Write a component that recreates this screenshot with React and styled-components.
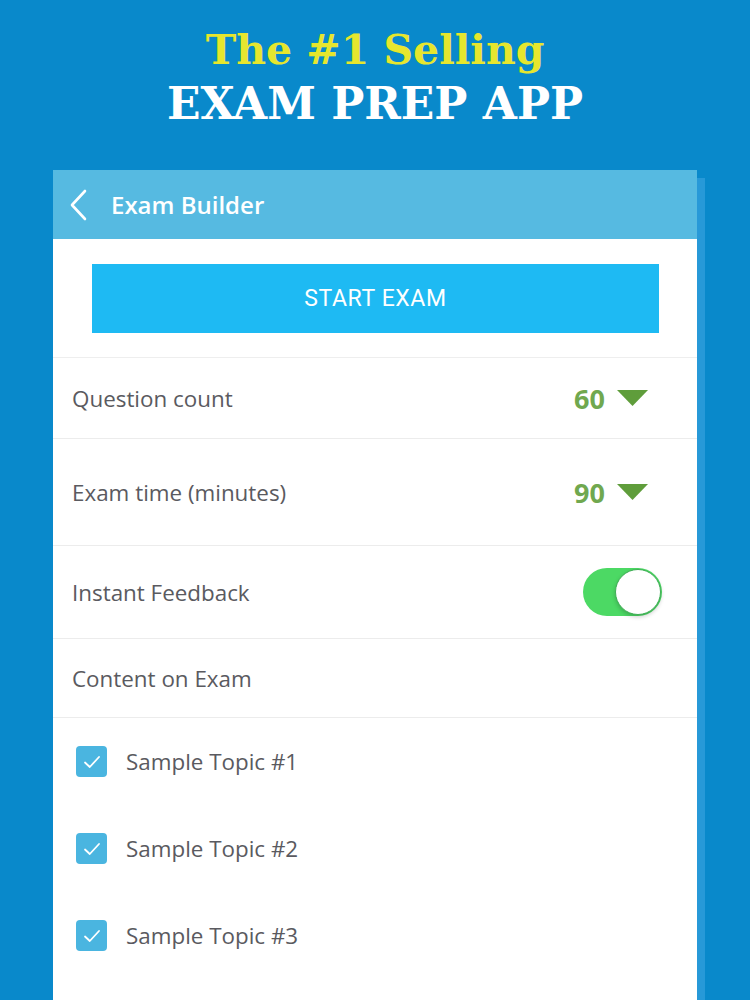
import React from "react";
import styled, { createGlobalStyle } from "styled-components";

const Global = createGlobalStyle`
  html, body { margin: 0; padding: 0; }
  body {
    background: #0989cb;
    width: 750px;
    height: 1000px;
    overflow: hidden;
    font-family: "Open Sans", "Liberation Sans", sans-serif;
  }
`;

const Page = styled.div`
  width: 750px;
  height: 1000px;
  overflow: hidden;
  display: flex;
  flex-direction: column;
`;

const Headline = styled.div`
  height: 170px;
  box-sizing: border-box;
  padding-top: 24px;
  display: flex;
  flex-direction: column;
  align-items: center;
  font-family: "DejaVu Serif", "Liberation Serif", serif;
  font-weight: bold;
`;

const Line = styled.div`
  color: ${(p) => p.color};
  font-size: ${(p) => p.size}px;
  line-height: ${(p) => p.lh}px;
  white-space: nowrap;
`;

const Card = styled.div`
  width: 644px;
  margin-left: 53px;
  background: #fff;
  box-shadow: 8px 8px 0 #2799d8;
  flex: 1;
  display: flex;
  flex-direction: column;
`;

const Header = styled.div`
  height: 69px;
  flex-shrink: 0;
  background: #56bae1;
  display: flex;
  align-items: center;
  padding-left: 16px;
  gap: 22px;
  color: #fff;
`;

const HeaderTitle = styled.div`
  font-size: 24px;
  font-weight: 600;
`;

const ButtonArea = styled.div`
  padding: 25px 38px 24px 39px;
  border-bottom: 1px solid #eeeeee;
`;

const StartButton = styled.div`
  height: 69px;
  background: #1ebaf3;
  color: #fff;
  font-family: Roboto, "Open Sans", sans-serif;
  font-size: 23px;
  letter-spacing: 0.6px;
  display: flex;
  align-items: center;
  justify-content: center;
`;

const Row = styled.div`
  height: ${(p) => p.h}px;
  flex-shrink: 0;
  box-sizing: border-box;
  border-bottom: 1px solid #ececec;
  display: flex;
  align-items: center;
  justify-content: space-between;
  padding: 0 36px 0 19px;
`;

const Label = styled.div`
  font-size: 22.4px;
  color: #5a5a60;
`;

const Value = styled.div`
  display: flex;
  align-items: center;
  gap: 12px;
  margin-right: 13px;
  color: #70a84f;
  font-weight: 700;
  font-size: 27px;
`;

const Toggle = styled.div`
  width: 79px;
  height: 48px;
  border-radius: 24px;
  background: #4cd964;
  position: relative;
  margin-right: -1px;
`;

const Knob = styled.div`
  position: absolute;
  right: 1px;
  top: 1px;
  width: 44px;
  height: 44px;
  border-radius: 50%;
  background: #fff;
  border: 1px solid #3fae55;
  box-shadow: 0 2px 4px rgba(0, 0, 0, 0.2);
`;

const TopicRow = styled.div`
  height: 87px;
  flex-shrink: 0;
  display: flex;
  align-items: center;
  gap: 19px;
  padding-left: 23px;
`;

const Check = styled.div`
  width: 31px;
  height: 31px;
  border-radius: 4px;
  background: #4ab5e0;
  display: flex;
  align-items: center;
  justify-content: center;
`;

const Triangle = () => (
  <svg width="31" height="16" viewBox="0 0 31 16">
    <path d="M0 0 L31 0 L15.5 16 Z" fill="#5f9d3b" />
  </svg>
);

const Chevron = () => (
  <svg width="20" height="32" viewBox="0 0 20 32">
    <path d="M16 2 L3 16 L16 30" fill="none" stroke="#fff" strokeWidth="2.6" strokeLinecap="round" strokeLinejoin="round" />
  </svg>
);

const Tick = () => (
  <svg width="18" height="14" viewBox="0 0 18 14">
    <path d="M2 7.5 L6.8 12 L16 2" fill="none" stroke="#fff" strokeWidth="1.8" strokeLinecap="round" strokeLinejoin="round" />
  </svg>
);

export default function App() {
  return (
    <>
      <Global />
      <Page>
        <Headline>
          <Line color="#e6e62e" size={41} lh={52}>The #1 Selling</Line>
          <Line color="#ffffff" size={44} lh={56}>EXAM PREP APP</Line>
        </Headline>
        <Card>
          <Header>
            <Chevron />
            <HeaderTitle>Exam Builder</HeaderTitle>
          </Header>
          <ButtonArea>
            <StartButton>START EXAM</StartButton>
          </ButtonArea>
          <Row h={81}>
            <Label>Question count</Label>
            <Value>
              60
              <Triangle />
            </Value>
          </Row>
          <Row h={107}>
            <Label>Exam time (minutes)</Label>
            <Value>
              90
              <Triangle />
            </Value>
          </Row>
          <Row h={93}>
            <Label>Instant Feedback</Label>
            <Toggle>
              <Knob />
            </Toggle>
          </Row>
          <Row h={79}>
            <Label>Content on Exam</Label>
          </Row>
          {["Sample Topic #1", "Sample Topic #2", "Sample Topic #3"].map((t) => (
            <TopicRow key={t}>
              <Check>
                <Tick />
              </Check>
              <Label>{t}</Label>
            </TopicRow>
          ))}
        </Card>
      </Page>
    </>
  );
}
